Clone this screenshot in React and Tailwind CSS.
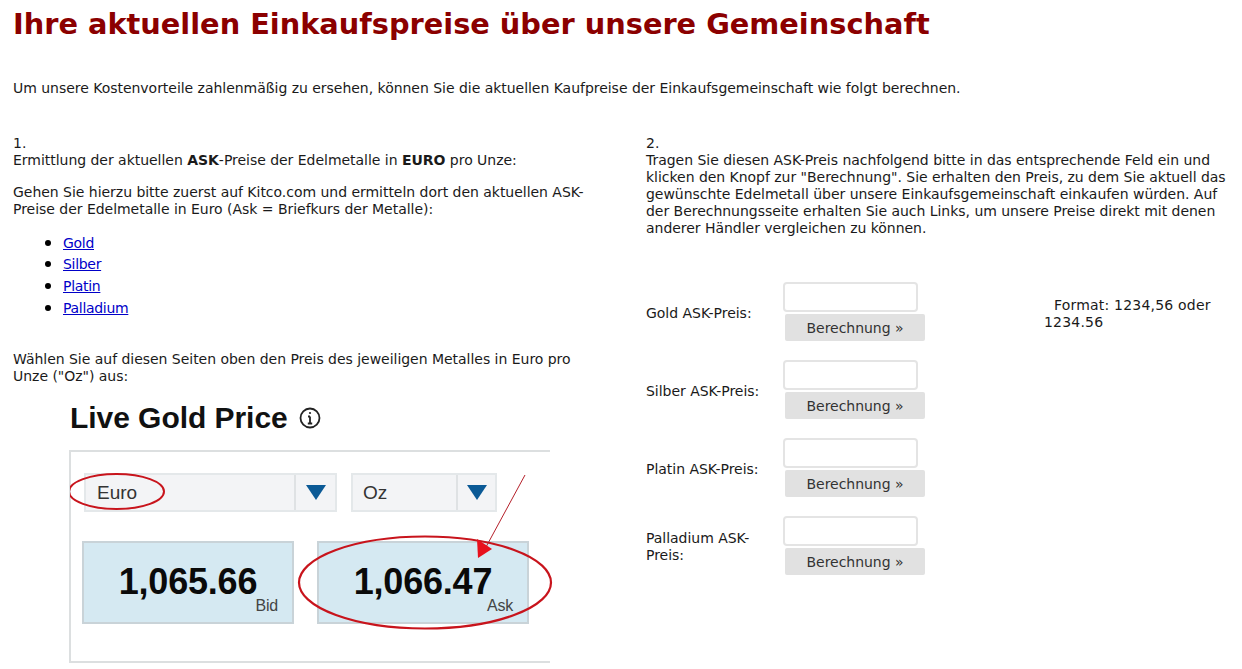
import React from "react";

const verdana = "font-['DejaVu_Sans',Verdana,sans-serif]";

function PriceBox({ value, label }) {
  return (
    <div className="relative flex h-[83px] w-[212px] items-center justify-center border-2 border-[#c9d3d8] bg-[#d5e9f2] pb-[1px]">
      <span className="text-[36px] font-bold leading-none tracking-[-0.2px] text-[#0a0a0a]">{value}</span>
      <span className="absolute bottom-[8px] right-[14px] text-[16px] leading-none tracking-[-0.2px] text-[#444]">{label}</span>
    </div>
  );
}

function SelectBox({ width, arrowWidth, text, pad }) {
  return (
    <div className={`flex h-[39px] items-center border-2 border-[#e4e8ea] bg-[#f3f4f6] ${width}`}>
      <span className={`flex-1 text-[19px] text-[#333] ${pad}`}>{text}</span>
      <span className={`flex h-full items-center justify-center border-l-2 border-[#dfe2e4] ${arrowWidth}`}>
        <svg width="20" height="15" viewBox="0 0 20 15"><path d="M0 0H20L10 15Z" fill="#0b5a96" /></svg>
      </span>
    </div>
  );
}

function GoldPicture() {
  return (
    <div className="relative mt-[5px] ml-[56px] w-[481px] font-['Liberation_Sans',Arial,sans-serif]">
      <div className="flex h-[60px] items-center gap-[11px] pb-[5px] pl-[1px]">
        <span className="text-[30px] font-bold leading-none tracking-[-0.05px] text-[#111]">Live Gold Price</span>
        <svg width="22" height="22" viewBox="0 0 22 22" fill="none" stroke="#222" strokeWidth="1.8">
          <circle cx="11" cy="11" r="9.5" />
          <path d="M11 9.5V16.5M8.8 16.5H13.2M9 9.5H11" />
          <circle cx="11" cy="6" r="1.1" fill="#222" stroke="none" />
        </svg>
      </div>
      <div className="h-[213px] border-y-2 border-l-2 border-[#dcdfe0] pt-[21px]">
        <div className="flex gap-[14px] pl-[13px]">
          <SelectBox width="w-[253px]" arrowWidth="w-[41px]" text="Euro" pad="pl-[11px]" />
          <SelectBox width="w-[146px]" arrowWidth="w-[39px]" text="Oz" pad="pl-[10px]" />
        </div>
        <div className="mt-[29px] flex gap-[23px] pl-[11px]">
          <PriceBox value="1,065.66" label="Bid" />
          <PriceBox value="1,066.47" label="Ask" />
        </div>
      </div>
      <svg className="absolute left-[1px] top-[-1px]" width="500" height="280" viewBox="70 390 500 280" fill="none">
        <ellipse cx="116.5" cy="492.5" rx="47.5" ry="17.5" stroke="#c8141c" strokeWidth="2" />
        <ellipse cx="425" cy="583.5" rx="126" ry="46" stroke="#c8141c" strokeWidth="2.2" />
        <path d="M525 476L486 548" stroke="#b5202a" strokeWidth="1" />
        <path d="M478 559L477 540L492 550Z" fill="#e8101c" />
      </svg>
    </div>
  );
}

function Row({ label, format }) {
  return (
    <div className="flex h-[78px] items-start">
      <div className="flex h-[60px] w-[137px] shrink-0 items-center pr-[8px] pt-[2px] leading-[17px]">{label}</div>
      <div className="w-[261px] shrink-0">
        <input className="block h-[30px] w-[135px] rounded-[4px] border-2 border-[#e4e4e4] bg-white" />
        <button className="mt-[2px] ml-[2px] block h-[27px] w-[140px] rounded-[2px] bg-[#e1e1e1] pt-[1px] text-center text-[#333]">
          Berechnung »
        </button>
      </div>
      {format && <div className="w-[188px] pt-[15px] leading-[17px] tracking-[0.2px] indent-[10px]">Format: 1234,56 oder 1234.56</div>}
    </div>
  );
}

const linkClass = "text-[#0000c8] underline tracking-[-0.3px]";
const itemClass = "marker:text-[18px] marker:text-black";

export default function App() {
  return (
    <div className={`h-[669px] w-[1242px] overflow-hidden bg-white pl-[13px] text-[14px] leading-[17px] tracking-[-0.03px] text-[#1a1a1a] ${verdana}`}>
      <h1 className="pt-[6px] text-[28.8px] font-bold leading-[36px] tracking-normal text-[#8b0000]">
        Ihre aktuellen Einkaufspreise über unsere Gemeinschaft
      </h1>
      <p className="mt-[38px]">
        Um unsere Kostenvorteile zahlenmäßig zu ersehen, können Sie die aktuellen Kaufpreise der Einkaufsgemeinschaft wie folgt berechnen.
      </p>
      <div className="mt-[38px] flex">
        <div className="w-[633px] shrink-0 pr-[40px]">
          <p>1.<br />Ermittlung der aktuellen <b>ASK</b>-Preise der Edelmetalle in <b>EURO</b> pro Unze:</p>
          <p className="mt-[15px] w-[585px]">
            Gehen Sie hierzu bitte zuerst auf Kitco.com und ermitteln dort den aktuellen ASK-Preise der Edelmetalle in Euro (Ask = Briefkurs der Metalle):
          </p>
          <ul className="mt-[13px] list-disc pl-[50px]">
            <li className={`h-[21.5px] leading-[21.5px] ${itemClass}`}><a className={linkClass}>Gold</a></li>
            <li className={`h-[21.5px] leading-[20px] ${itemClass}`}><a className={linkClass}>Silber</a></li>
            <li className={`h-[22px] leading-[22px] ${itemClass}`}><a className={linkClass}>Platin</a></li>
            <li className={`h-[23px] leading-[22px] ${itemClass}`}><a className={linkClass}>Palladium</a></li>
          </ul>
          <p className="mt-[32px] w-[585px]">
            Wählen Sie auf diesen Seiten oben den Preis des jeweiligen Metalles in Euro pro Unze ("Oz") aus:
          </p>
          <GoldPicture />
        </div>
        <div className="w-[590px] shrink-0">
          <p>2.<br />Tragen Sie diesen ASK-Preis nachfolgend bitte in das entsprechende Feld ein und klicken den Knopf zur "Berechnung". Sie erhalten den Preis, zu dem Sie aktuell das gewünschte Edelmetall über unsere Einkaufsgemeinschaft einkaufen würden. Auf der Berechnungsseite erhalten Sie auch Links, um unsere Preise direkt mit denen anderer Händler vergleichen zu können.</p>
          <div className="mt-[45px]">
            <Row label="Gold ASK-Preis:" format />
            <Row label="Silber ASK-Preis:" />
            <Row label="Platin ASK-Preis:" />
            <Row label="Palladium ASK-Preis:" />
          </div>
        </div>
      </div>
    </div>
  );
}
